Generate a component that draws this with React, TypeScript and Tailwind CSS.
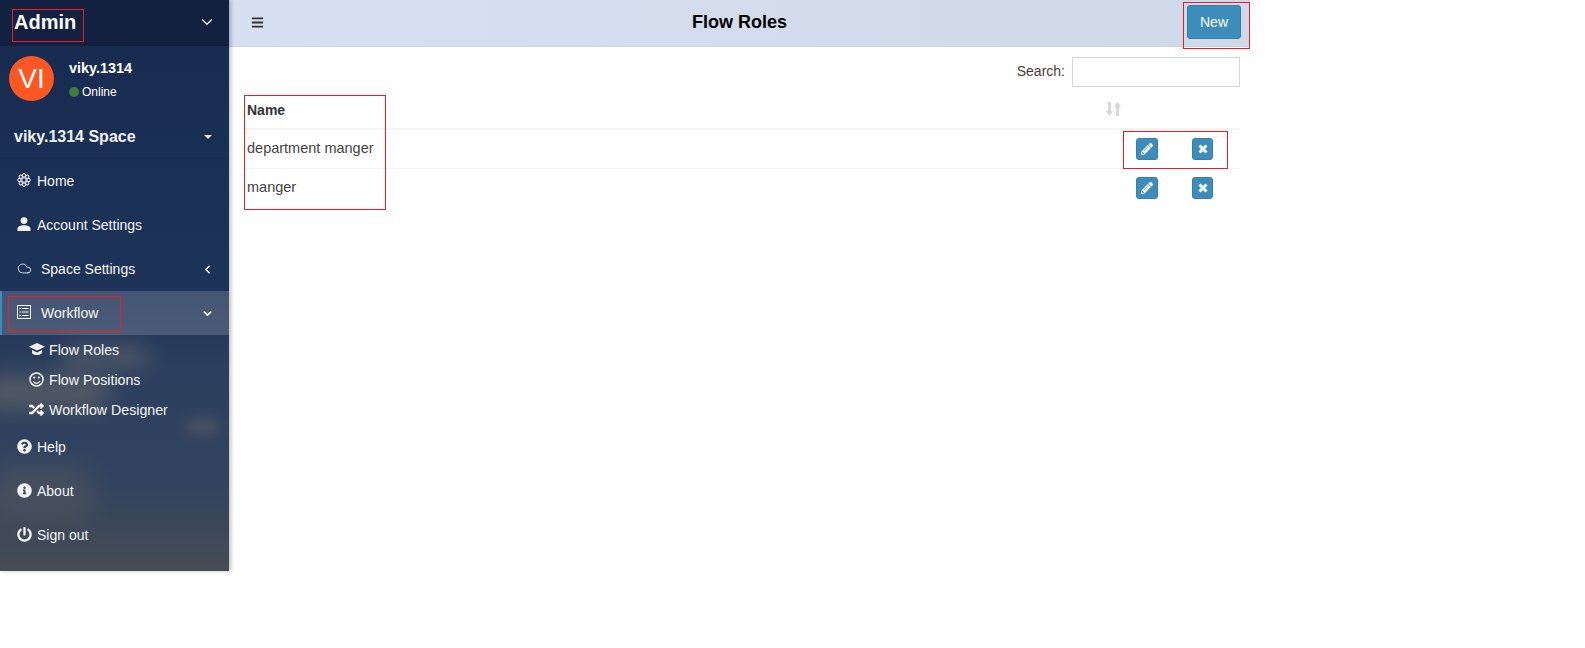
import { ReactNode } from 'react';
import { ChevronDown, ChevronLeft, Cloud } from 'lucide-react';
import { FaRandom, FaQuestionCircle, FaPencilAlt, FaBars, FaInfoCircle, FaPowerOff } from 'react-icons/fa';

function FlowerCog() {
  const petals = [0, 45, 90, 135, 180, 225, 270, 315];
  return (
    <svg width="14" height="14" viewBox="0 0 14 14" fill="none" stroke="currentColor" strokeWidth="1">
      {petals.map((a) => (
        <circle key={a} cx="7" cy="2.4" r="1.7" transform={`rotate(${a} 7 7)`} />
      ))}
      <circle cx="7" cy="7" r="2.2" />
    </svg>
  );
}

function ListBox() {
  return (
    <svg width="14" height="14" viewBox="0 0 14 14" fill="none" stroke="currentColor" strokeWidth="1">
      <rect x="0.5" y="0.5" width="13" height="13" />
      <path d="M2.5 3.5h1.5M5 3.5h6.5M2.5 7h1.5M5 7h6.5M2.5 10.5h1.5M5 10.5h6.5" />
    </svg>
  );
}

function Person() {
  return (
    <svg width="14" height="14" viewBox="0 0 14 14" fill="currentColor">
      <circle cx="7" cy="3.6" r="3.4" />
      <path d="M0.5 14v-2.2C0.5 9.6 3.5 8.2 7 8.2s6.5 1.4 6.5 3.6V14z" />
    </svg>
  );
}

function Cap() {
  return (
    <svg width="16" height="14" viewBox="0 0 16 14" fill="currentColor">
      <path d="M8 1 16 4.8 8 8.6 0 4.8z" />
      <path d="M3 8v3.2C4.4 12.6 6.1 13 8 13s3.6-.4 5-1.8V8L8 10.4z" />
    </svg>
  );
}

function Smile() {
  return (
    <svg width="15" height="15" viewBox="0 0 15 15" fill="none" stroke="currentColor" strokeWidth="1.5">
      <circle cx="7.5" cy="7.5" r="6.5" />
      <path d="M4.2 9.2c.8 1.5 1.9 2.1 3.3 2.1s2.5-.6 3.3-2.1" strokeWidth="1.3" />
      <circle cx="5.2" cy="5.6" r="1" fill="currentColor" stroke="none" />
      <circle cx="9.8" cy="5.6" r="1" fill="currentColor" stroke="none" />
    </svg>
  );
}

function Cross() {
  return (
    <svg width="10" height="10" viewBox="0 0 10 10" fill="none" stroke="currentColor" strokeWidth="3">
      <path d="M1.5 1.5 8.5 8.5M8.5 1.5 1.5 8.5" />
    </svg>
  );
}

function NavItem({ icon, label, gap = 'gap-[5px]', right }: { icon: ReactNode; label: string; gap?: string; right?: ReactNode }) {
  return (
    <div className={`h-11 flex items-center pl-[17px] pr-[15px] text-[14px] text-[#f3f5f8] ${gap}`}>
      <span className="w-[15px] flex justify-start -translate-y-[1px]">{icon}</span>
      <span>{label}</span>
      {right && <span className="ml-auto">{right}</span>}
    </div>
  );
}

function SubItem({ icon, label }: { icon: ReactNode; label: string }) {
  return (
    <div className="h-[30px] flex items-center gap-[4px] pl-[29px] pt-[2px] text-[14.2px] text-[#f3f5f8]">
      <span className="w-[16px] flex justify-start -translate-y-[2px]">{icon}</span>
      <span>{label}</span>
    </div>
  );
}

function ActionButtons() {
  return (
    <td className="p-0">
      <div className="flex items-center justify-end gap-[34px] pr-[27px]">
        <button className="w-[22px] h-[22px] rounded-[3px] bg-[#3c8dbc] border border-[#367fa9] flex items-center justify-center text-white">
          <FaPencilAlt size={12} />
        </button>
        <button className="w-[21px] h-[22px] rounded-[3px] bg-[#3c8dbc] border border-[#367fa9] flex items-center justify-center text-white">
          <Cross />
        </button>
      </div>
    </td>
  );
}

function Mark({ className }: { className: string }) {
  return <div className={`absolute border border-[#ed1c24] pointer-events-none z-20 ${className}`} />;
}

export default function App() {
  return (
    <div className="relative w-[1585px] h-[648px] bg-white overflow-hidden font-['Liberation_Sans',Arial,sans-serif]">
      <div className="flex w-[1250px] h-[571px]">
        <aside className="relative w-[229px] shrink-0 h-full overflow-hidden bg-[linear-gradient(180deg,#162a50_0%,#1e3358_50%,#2c3f5e_65%,#31435e_85%,#474c54_100%)] shadow-[2px_0_4px_rgba(0,0,0,0.25)] z-10">
          <div className="absolute left-[60px] top-[345px] w-[90px] h-[24px] rounded-full bg-[#7d7872] opacity-40 blur-[10px]" />
          <div className="absolute left-[-20px] top-[378px] w-[130px] h-[30px] rounded-full bg-[#7a746a] opacity-55 blur-[12px]" />
          <div className="absolute left-[185px] top-[420px] w-[35px] h-[14px] rounded-full bg-[#6e6a66] opacity-50 blur-[7px]" />
          <div className="absolute left-[-15px] top-[465px] w-[110px] h-[55px] rounded-full bg-[#5f5e5e] opacity-45 blur-[14px]" />
          <div className="relative">
            <div className="h-[47px] flex items-center justify-between pl-[14px] pr-[13px] pb-[2px] bg-[#11213f] border-b border-[#1b2c4d]">
              <span className="text-[20px] font-bold text-white">Admin</span>
              <ChevronDown size={18} strokeWidth={1.5} className="text-white" />
            </div>
            <div className="h-[68px] flex pl-[9px] pt-[9px]">
              <div className="w-[45px] h-[45px] rounded-full bg-[#ff5722] flex items-center justify-center text-white text-[28px]">VI</div>
              <div className="ml-[15px] pt-[4px]">
                <div className="text-[14.4px] font-bold text-white leading-[16px]">viky.1314</div>
                <div className="flex items-center gap-[3px] mt-[9px] text-[12px] text-white leading-[14px]">
                  <span className="w-[10px] h-[10px] rounded-full bg-[#3f7d3f]" />
                  Online
                </div>
              </div>
            </div>
            <div className="h-[44px] flex items-center justify-between pl-[14px] pr-[17px] border-b border-[#1a2c4e] text-[16px] font-bold text-[#eef1f5]">
              <span>viky.1314 Space</span>
              <span className="w-0 h-0 border-x-[4px] border-x-transparent border-t-[4px] border-t-[#e6e9ee]" />
            </div>
            <NavItem icon={<FlowerCog />} label="Home" />
            <NavItem icon={<Person />} label="Account Settings" />
            <NavItem icon={<Cloud size={17} strokeWidth={1.3} />} label="Space Settings" gap="gap-[9px]" right={<ChevronLeft size={13} strokeWidth={3} />} />
            <div className="bg-[rgba(255,255,255,0.17)] border-l-2 border-[#3c8dbc]">
              <div className="-ml-[2px]">
                <NavItem icon={<ListBox />} label="Workflow" gap="gap-[9px]" right={<ChevronDown size={13} strokeWidth={3} />} />
              </div>
            </div>
            <SubItem icon={<Cap />} label="Flow Roles" />
            <SubItem icon={<Smile />} label="Flow Positions" />
            <SubItem icon={<FaRandom size={15} />} label="Workflow Designer" />
            <NavItem icon={<FaQuestionCircle size={15} />} label="Help" />
            <NavItem icon={<FaInfoCircle size={15} />} label="About" />
            <NavItem icon={<FaPowerOff size={15} />} label="Sign out" />
          </div>
        </aside>

        <main className="flex-1 min-w-0">
          <header className="relative h-[47px] flex items-start justify-between pl-[22px] pr-[9px] pt-[5px] bg-[linear-gradient(90deg,#d6e0f0,#d0d9e8)] border-b border-[#ccd2dc]">
            <FaBars size={13} className="text-[#333] mt-[11px]" />
            <h1 className="absolute left-[463px] top-[9px] text-[18px] font-bold text-black">Flow Roles</h1>
            <button className="w-[54px] h-[34px] rounded-[3px] bg-[#3c8dbc] border border-[#367fa9] text-[14px] text-white">New</button>
          </header>
          <div className="pl-[15px] pr-[10px]">
            <div className="flex items-start justify-end gap-[7px] pt-[10px] text-[14px] text-[#4a3a3a]">
              <label className="pt-[4px]">Search:</label>
              <input className="w-[168px] h-[30px] border border-[#d2d6de] outline-none" />
            </div>
            <table className="w-full border-collapse text-[14.5px] text-[#444]">
              <thead>
                <tr className="h-[42px] border-b-2 border-[#f4f4f4]">
                  <th className="text-left font-bold pl-[3px] pt-[5px] text-[14px] text-[#333]">Name</th>
                  <th className="w-[136px] text-left pt-[3px]">
                    <svg width="15" height="16" viewBox="0 0 15 16" className="ml-[2px] fill-[#d8d8d8]">
                      <path d="M2 1h3v9h2l-3.5 5L0 10h2zM10 15V6H8l3.5-5L15 6h-2v9z" />
                    </svg>
                  </th>
                </tr>
              </thead>
              <tbody>
                <tr className="h-[39px] border-b border-[#f4f4f4]">
                  <td className="pl-[3px]">department manger</td>
                  <ActionButtons />
                </tr>
                <tr className="h-[39px]">
                  <td className="pl-[3px]">manger</td>
                  <ActionButtons />
                </tr>
              </tbody>
            </table>
          </div>
        </main>
      </div>

      <Mark className="left-[12px] top-[9px] w-[72px] h-[33px]" />
      <Mark className="left-[8px] top-[296px] w-[113px] h-[35px]" />
      <Mark className="left-[1183px] top-[2px] w-[67px] h-[47px]" />
      <Mark className="left-[1123px] top-[131px] w-[105px] h-[38px]" />
      <Mark className="left-[244px] top-[95px] w-[142px] h-[115px]" />
    </div>
  );
}
